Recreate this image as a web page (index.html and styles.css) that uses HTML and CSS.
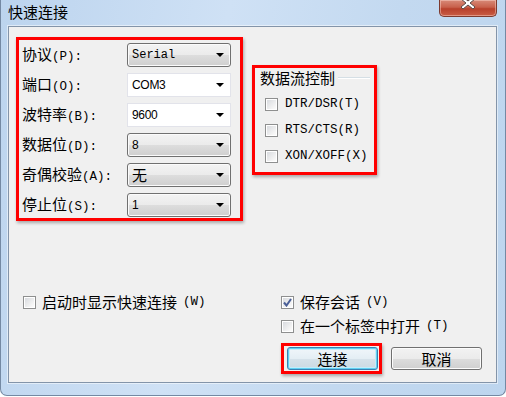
FILE: index.html
```html
<!DOCTYPE html>
<html lang="zh-CN">
<head>
  <meta charset="UTF-8">
  <title>快速连接</title>
  <link rel="stylesheet" href="styles.css">
</head>
<body>

  <div class="window">
    <div class="titlebar">
      <span class="title">快速连接</span>
      <span class="close">
        <svg width="14" height="12" viewBox="0 0 14 12"><path d="M2 0 L7 4 L12 0 L14 2 L9 6 L14 10 L12 12 L7 8 L2 12 L0 10 L5 6 L0 2 Z" fill="#fff" stroke="#5a4a48" stroke-width="1"/></svg>
      </span>
    </div>

    <div class="client">
      <div class="top">
        <div class="mark form">
          <label>协议<span class="key">(P):</span></label>
          <div class="combo"><span class="val mono">Serial</span><i class="arrow"></i></div>

          <label>端口<span class="key">(O):</span></label>
          <div class="combo edit"><span class="val sans">COM3</span><i class="arrow"></i></div>

          <label>波特率<span class="key">(B):</span></label>
          <div class="combo edit"><span class="val sans">9600</span><i class="arrow"></i></div>

          <label>数据位<span class="key">(D):</span></label>
          <div class="combo"><span class="val sans">8</span><i class="arrow"></i></div>

          <label>奇偶校验<span class="key">(A):</span></label>
          <div class="combo"><span class="val">无</span><i class="arrow"></i></div>

          <label>停止位<span class="key">(S):</span></label>
          <div class="combo"><span class="val sans">1</span><i class="arrow"></i></div>
        </div>

        <div class="mark flow">
          <div class="legend">数据流控制</div>
          <label class="check"><span class="cb"></span><span class="key">DTR/DSR(T)</span></label>
          <label class="check"><span class="cb"></span><span class="key">RTS/CTS(R)</span></label>
          <label class="check"><span class="cb"></span><span class="key">XON/XOFF(X)</span></label>
        </div>
      </div>

      <div class="bottom">
        <label class="check startup"><span class="cb"></span>启动时显示快速连接<span class="key">(W)</span></label>
        <div class="right">
          <label class="check"><span class="cb on"><svg width="9" height="9" viewBox="0 0 9 9"><path d="M1 4.5 L3.5 7.5 L8 1" fill="none" stroke="#4a5f97" stroke-width="2"/></svg></span>保存会话<span class="key">(V)</span></label>
          <label class="check"><span class="cb"></span>在一个标签中打开<span class="key">(T)</span></label>
          <div class="buttons">
            <div class="mark btn-mark"><button class="btn default">连接</button></div>
            <button class="btn">取消</button>
          </div>
        </div>
      </div>
    </div>
  </div>

</body>
</html>
```

FILE: styles.css
```css
body {
  margin: 0;
  background-color: #fff;
  font-family: "Noto Sans CJK SC", sans-serif;
  font-size: 15px;
  color: #000;
}

.window {
  width: 506px;
  height: 396px;
  box-sizing: border-box;
  display: flex;
  flex-direction: column;
  padding: 0 8px 12px 7px;
  background: linear-gradient(100deg, #bcd4ee 0%, #cfe1f5 40%, #c3d9f0 70%, #bdd5ee 100%);
  border: 1px solid #7489a3;
  border-top: none;
  border-radius: 0 0 7px 7px;
}

.titlebar {
  height: 26px;
  display: flex;
  align-items: flex-start;
}

.title {
  padding-top: 2px;
  line-height: 20px;
  font-size: 15px;
}

.close {
  margin-left: auto;
  width: 58px;
  height: 17px;
  box-sizing: border-box;
  display: flex;
  justify-content: center;
  align-items: flex-start;
  overflow: hidden;
  border: 1px solid #7d3a2e;
  border-top: none;
  border-radius: 0 0 5px 5px;
  background: linear-gradient(#d88a78 0%, #c8604b 45%, #b8402b 55%, #c95d45 100%);
  box-shadow: inset 0 0 0 1px rgba(255, 220, 210, .45);
}

.close svg {
  margin-top: -3px;
}

.client {
  flex: 1;
  display: flex;
  flex-direction: column;
  background-color: #f0f0f0;
  border: 1px solid #8394a9;
  box-shadow: 0 0 0 1px rgba(255, 255, 255, .5);
}

.top {
  display: flex;
  align-items: flex-start;
  gap: 9px;
  padding: 10px 0 0 7px;
}

.mark {
  border: 3px solid #f00;
  box-shadow: 1px 2px 3px rgba(0, 0, 0, .3);
}

.key {
  font-family: "Liberation Mono", monospace;
  font-size: 12.5px;
}

.form {
  width: 227px;
  box-sizing: border-box;
  padding: 3px 9px 1px 3px;
  display: grid;
  grid-template-columns: 1fr 104px;
  grid-auto-rows: 24px;
  row-gap: 6px;
  align-items: center;
}

.form label {
  line-height: 24px;
  white-space: nowrap;
}

.combo {
  height: 24px;
  box-sizing: border-box;
  display: flex;
  align-items: center;
  justify-content: space-between;
  padding: 0 6px 0 4px;
  border: 1px solid #707070;
  border-radius: 3px;
  background: linear-gradient(#f3f3f3 0%, #ebebeb 50%, #dddddd 51%, #cfcfcf 100%);
  box-shadow: inset 0 0 0 1px #fbfbfb;
}

.combo.edit {
  border-color: #e2e3ea;
  border-radius: 0;
  background: #fff;
  box-shadow: none;
}

.val {
  line-height: 22px;
}

.val.mono {
  font-family: "Liberation Mono", monospace;
  font-size: 12px;
}

.val.sans {
  font-family: "Liberation Sans", sans-serif;
  font-size: 12px;
  letter-spacing: -0.3px;
}

.arrow {
  width: 0;
  height: 0;
  border-left: 4px solid transparent;
  border-right: 4px solid transparent;
  border-top: 4px solid #000;
}

.flow {
  width: 125px;
  height: 110px;
  box-sizing: border-box;
  margin-top: 28px;
  padding-right: 4px;
}

.legend {
  display: flex;
  align-items: center;
  gap: 3px;
  padding-left: 5px;
  line-height: 20px;
}

.legend::after {
  content: "";
  flex: 1;
  border-top: 1px solid #d5dfe5;
  border-bottom: 1px solid #fff;
}

.check {
  display: flex;
  align-items: center;
  gap: 7px;
  white-space: nowrap;
}

.flow .check {
  height: 26px;
  padding-left: 10px;
}

.flow .check:first-of-type {
  margin-top: 3px;
}

.cb {
  width: 13px;
  height: 13px;
  box-sizing: border-box;
  display: flex;
  align-items: center;
  justify-content: center;
  flex-shrink: 0;
  border: 1px solid #8e8f8f;
  background: linear-gradient(135deg, #d4d7dc 0%, #f4f4f4 70%, #fff 100%);
  box-shadow: inset 0 0 0 1px #fff;
}

.bottom {
  margin-top: auto;
  display: flex;
  align-items: flex-start;
  padding: 0 0 8px 14px;
}

.bottom .check {
  line-height: 20px;
  gap: 6px;
}

.startup {
  flex: 0 0 258px;
}

.right {
  display: flex;
  flex-direction: column;
  gap: 4px;
}

.buttons {
  display: flex;
  align-items: center;
  margin-top: 3px;
}

.btn-mark {
  padding: 1px 1px 1px 3px;
  box-shadow: 1px 2px 3px rgba(0, 0, 0, .3);
}

.btn {
  width: 91px;
  height: 23px;
  padding: 0;
  font-family: "Noto Sans CJK SC", sans-serif;
  font-size: 15px;
  line-height: 21px;
  color: #000;
  border: 1px solid #707070;
  border-radius: 3px;
  background: linear-gradient(#f2f2f2 0%, #ebebeb 50%, #dddddd 51%, #cfcfcf 100%);
  box-shadow: inset 0 0 0 1px #fcfcfc;
}

.buttons > .btn {
  margin-left: 9px;
}

.btn.default {
  display: block;
  border-color: #3c7fb1;
  background: linear-gradient(#f0f6fa 0%, #e4eef4 50%, #d6e2ea 51%, #cbd9e2 100%);
  box-shadow: inset 0 0 0 1px #5fd0f2, inset 0 0 0 2px #c4ecfa;
}
```
